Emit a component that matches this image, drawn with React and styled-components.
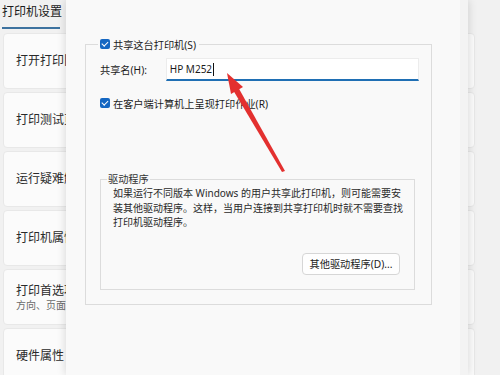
import styled, { createGlobalStyle } from "styled-components";

const GlobalStyle = createGlobalStyle`
	html, body {
		margin: 0;
		padding: 0;
		background: #ececec;
	}
	* {
		box-sizing: border-box;
	}
`;

const items = [
	{ title: "打开打印队列" },
	{ title: "打印测试页" },
	{ title: "运行疑难解答" },
	{ title: "打印机属性" },
	{ title: "打印首选项", sub: "方向、页面顺序" },
	{ title: "硬件属性" },
];

const driverLines = [
	"如果运行不同版本 Windows 的用户共享此打印机，则可能需要安",
	"装其他驱动程序。这样，当用户连接到共享打印机时就不需要查找",
	"打印机驱动程序。",
];

export default function App() {
	return (
		<>
			<GlobalStyle />
			<Screen>
				<SettingsPage>
					<Tab>打印机设置</Tab>
					<CardList>
						{items.map((item) => (
							<Card key={item.title}>
								<CardTitle>{item.title}</CardTitle>
								{item.sub && <CardSub>{item.sub}</CardSub>}
							</Card>
						))}
					</CardList>
				</SettingsPage>

				<Dialog>
					<Group>
						<Legend>
							<Check />
							共享这台打印机(S)
						</Legend>
						<FieldRow>
							<FieldLabel>共享名(H):</FieldLabel>
							<TextBox>
								HP M252
								<Caret />
							</TextBox>
						</FieldRow>
						<CheckRow>
							<Check />
							在客户端计算机上呈现打印作业(R)
						</CheckRow>
						<DriverGroup>
							<DriverLegend>驱动程序</DriverLegend>
							<Note>
								{driverLines.map((line) => (
									<span key={line}>{line}</span>
								))}
							</Note>
							<Button>其他驱动程序(D)...</Button>
						</DriverGroup>
					</Group>
				</Dialog>

				<Arrow viewBox="0 0 500 375">
					<polygon points="285,171 282,172 233,90 238,87" fill="#e3302f" />
					<polygon points="227,73 243,87 231,94" fill="#e3302f" />
				</Arrow>
			</Screen>
		</>
	);
}

const Screen = styled.div`
	position: relative;
	width: 500px;
	height: 375px;
	overflow: hidden;
	background: #ebebeb;
	font-family: "Noto Sans", "Noto Sans CJK SC", sans-serif;
	color: #1b1b1b;
`;

const SettingsPage = styled.div`
	display: flex;
	flex-direction: column;
	padding: 0 25px 0 2px;
	height: 100%;
	background: #f1f1f1;
`;

const Tab = styled.div`
	align-self: flex-start;
	font-size: 12px;
	line-height: 16px;
	padding: 4px 0 7px;
	border-bottom: 2px solid #3d729f;
	width: 58px;
	white-space: nowrap;
`;

const CardList = styled.div`
	display: flex;
	flex-direction: column;
	gap: 3px;
	margin-top: 4px;
	padding-left: 1px;
`;

const Card = styled.div`
	display: flex;
	flex-direction: column;
	justify-content: center;
	height: 56px;
	padding-left: 12px;
	background: #fbfbfb;
	border: 1px solid #e8e8e8;
	border-radius: 4px;
	flex-shrink: 0;
`;

const CardTitle = styled.div`
	font-size: 12px;
	line-height: 14px;
	color: #2a2a2a;
	white-space: nowrap;
`;

const CardSub = styled.div`
	font-size: 10px;
	line-height: 12px;
	margin-top: 1px;
	color: #6a6a6a;
	white-space: nowrap;
`;

const Dialog = styled.div`
	position: absolute;
	left: 66px;
	top: 0;
	width: 402px;
	height: 375px;
	padding: 37px 0 0 19px;
	background: #f9f9f9;
	border-right: 8px solid #f3f3f3;
	box-shadow: 0 0 9px rgba(0, 0, 0, 0.16);
	font-size: 10.2px;
`;

const Group = styled.fieldset`
	margin: 0;
	width: 347px;
	min-width: 0;
	padding: 0 12px 14px 14px;
	border: 1px solid #dcdcdc;
	border-radius: 0;
	display: flex;
	flex-direction: column;
`;

const Legend = styled.legend`
	display: flex;
	align-items: center;
	gap: 3px;
	height: 14px;
	padding: 0 3px 0 2px;
	margin-left: -2px;
	white-space: nowrap;
`;

const Check = styled.span`
	position: relative;
	width: 10px;
	height: 10px;
	border-radius: 2px;
	background: #1567c2;
	flex-shrink: 0;
	&::after {
		content: "";
		position: absolute;
		left: 3.2px;
		top: 1.2px;
		width: 2.5px;
		height: 5px;
		border: solid #fff;
		border-width: 0 1.2px 1.2px 0;
		transform: rotate(45deg);
	}
`;

const FieldRow = styled.div`
	display: flex;
	align-items: center;
	margin-top: 7px;
`;

const FieldLabel = styled.div`
	width: 66px;
	white-space: nowrap;
`;

const TextBox = styled.div`
	display: flex;
	align-items: center;
	width: 254px;
	height: 23px;
	padding-left: 3px;
	background: #ffffff;
	border: 1px solid #ececec;
	border-bottom: 2px solid #1f6fb4;
	font-size: 10px;
	white-space: nowrap;
`;

const Caret = styled.span`
	width: 1px;
	height: 13px;
	margin-left: 1px;
	background: #111;
`;

const CheckRow = styled.div`
	display: flex;
	align-items: center;
	gap: 3px;
	height: 14px;
	margin-top: 15px;
	white-space: nowrap;
`;

const DriverGroup = styled.fieldset`
	margin: 62px 0 0;
	width: 315px;
	min-width: 0;
	padding: 0 12px 14px 12px;
	border: 1px solid #dcdcdc;
	display: flex;
	flex-direction: column;
`;

const DriverLegend = styled.legend`
	padding: 0 1px;
	margin-left: -6px;
	line-height: 14px;
	white-space: nowrap;
	color: #333;
`;

const Note = styled.p`
	margin: 0;
	display: flex;
	flex-direction: column;
	font-size: 10px;
	line-height: 14.5px;
	color: #2a2a2a;
	span {
		white-space: nowrap;
	}
`;

const Button = styled.button`
	align-self: flex-end;
	margin: 23px 2px 0 0;
	width: 98px;
	height: 22px;
	padding: 0;
	background: #fefefe;
	border: 1px solid #d6d6d6;
	border-radius: 4px;
	font-family: inherit;
	font-size: 10.2px;
	color: #1b1b1b;
	white-space: nowrap;
`;

const Arrow = styled.svg`
	position: absolute;
	left: 0;
	top: 0;
	width: 500px;
	height: 375px;
	pointer-events: none;
`;
